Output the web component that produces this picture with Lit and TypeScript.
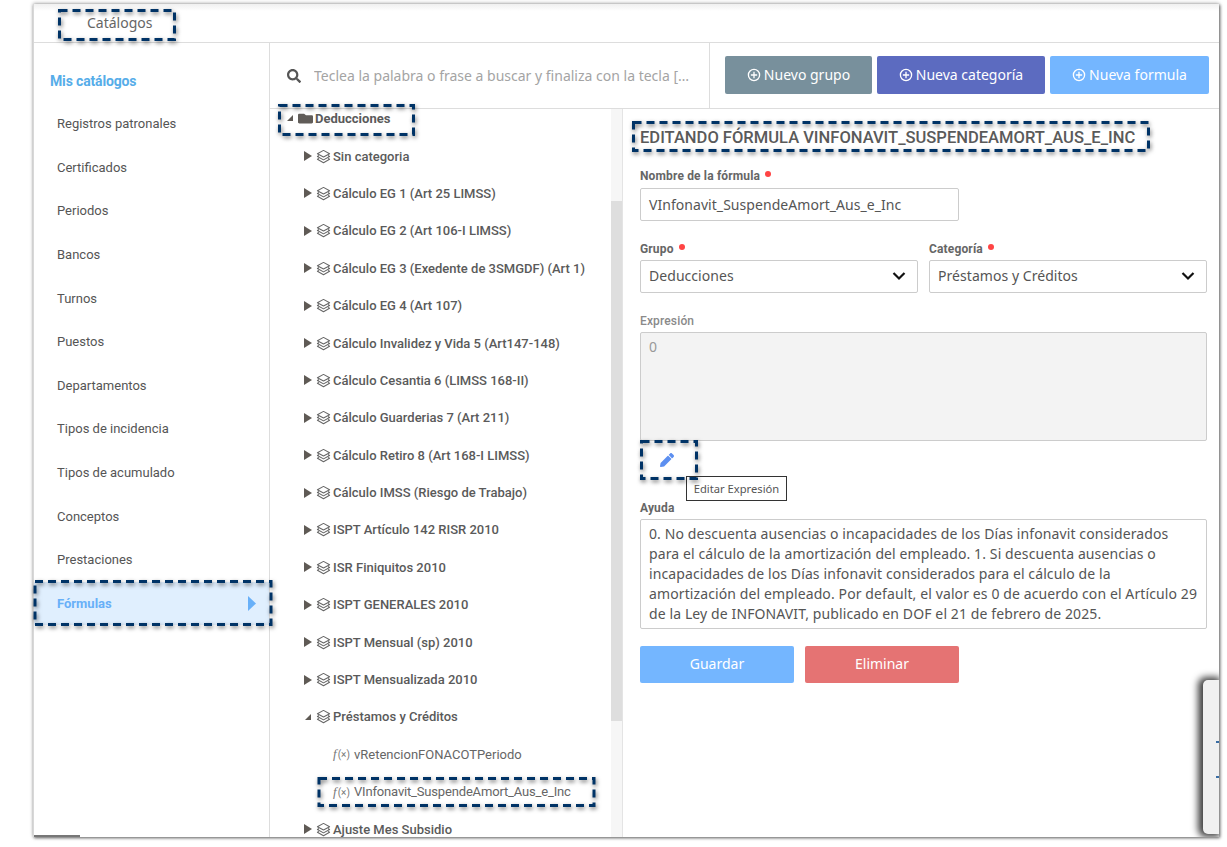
import { LitElement, html, css, svg } from "lit";
import { customElement } from "lit/decorators.js";

const NAV = ["Registros patronales","Certificados","Periodos","Bancos","Turnos","Puestos","Departamentos","Tipos de incidencia","Tipos de acumulado","Conceptos","Prestaciones"];
const CATS1 = ["Sin categoria","Cálculo EG 1 (Art 25 LIMSS)","Cálculo EG 2 (Art 106-I LIMSS)","Cálculo EG 3 (Exedente de 3SMGDF) (Art 1)","Cálculo EG 4 (Art 107)","Cálculo Invalidez y Vida 5 (Art147-148)","Cálculo Cesantia 6 (LIMSS 168-II)","Cálculo Guarderias 7 (Art 211)","Cálculo Retiro 8 (Art 168-I LIMSS)","Cálculo IMSS (Riesgo de Trabajo)","ISPT Artículo 142 RISR 2010","ISR Finiquitos 2010","ISPT GENERALES 2010","ISPT Mensual (sp) 2010","ISPT Mensualizada 2010"];
const NOTES = [[59.5,10.5,115,29],[279.5,105.5,134,29],[633.5,122.5,515,28],[641.5,441.5,55,37],[35,581.5,236,43],[319,778.5,275,27]];

const layers = html`<svg class="layers" viewBox="0 0 16 16" fill="none" stroke="currentColor" stroke-width="1.1" stroke-linejoin="round"><path d="M8 1.5 14.5 5 8 8.5 1.5 5Z"/><path d="M3.2 7 1.5 8 8 11.6 14.5 8 12.8 7"/><path d="M3.2 10 1.5 11 8 14.6 14.5 11 12.8 10"/></svg>`;
const plus = html`<svg class="plus" viewBox="0 0 16 16" fill="none" stroke="currentColor" stroke-width="1.5"><circle cx="8" cy="8" r="6.4"/><path d="M8 4.4v7.2M4.4 8h7.2"/></svg>`;
const chevron = html`<svg class="chev" viewBox="0 0 14 10" fill="none" stroke="#111" stroke-width="2.2"><path d="M1.5 2 7 7.5 12.5 2"/></svg>`;
const closed = html`<svg class="caret" viewBox="0 0 8 10"><path d="M0 0 8 5 0 10Z" fill="#5f5a55"/></svg>`;
const open = html`<svg class="caret" viewBox="0 0 8 10"><path d="M7 2V8H1Z" fill="#5f5a55"/></svg>`;

@customElement("app-root")
export class AppRoot extends LitElement {
  static styles = css`
    :host { display: block; width: 1227px; height: 847px; position: relative; overflow: hidden; background: #fff; font-family: Roboto, "Liberation Sans", sans-serif; color: #555; box-sizing: border-box; padding: 4px 8px 10px 33px; }
    * { box-sizing: border-box; }
    .frame { position: relative; width: 1186px; height: 833px; background: #fff; box-shadow: 0 -1px 4px rgba(0,0,0,.22), 1px 1px 3px rgba(0,0,0,.6); overflow: hidden; display: flex; flex-direction: column; border-left: 1px solid #d8d8d8; }
    .top { height: 39px; flex: none; border-bottom: 1px solid #ddd; padding: 0 0 2px 53px; display: flex; align-items: center; font: 14px "Noto Sans", sans-serif; color: #666; background: linear-gradient(#f0f0f0, #fff 7px); }
    .body { flex: 1; display: flex; min-height: 0; }
    .side { width: 236px; flex: none; border-right: 1px solid #ddd; padding-top: 30px; }
    .side h2 { margin: 0 0 12.2px 16px; font-size: 14px; font-weight: 700; color: #56ade9; line-height: 17px; letter-spacing: -.15px; }
    .nav { height: 43.6px; padding-left: 23px; font-size: 13px; line-height: 43.6px; color: #555; }
    .nav.active { background: #e0effe; color: #68b0f8; font-weight: 700; display: flex; justify-content: space-between; align-items: center; padding-right: 13px; }
    .nav.active svg { width: 8px; height: 15px; }
    .main { flex: 1; display: flex; flex-direction: column; min-width: 0; }
    .bar { height: 66px; flex: none; border-bottom: 1px solid #ddd; display: flex; }
    .search { width: 440px; flex: none; border-right: 1px solid #ddd; display: flex; align-items: center; padding: 0 13px 0 17px; gap: 13px; }
    .search svg { width: 14px; height: 14px; flex: none; fill: #555; }
    .search input { flex: 1; min-width: 0; border: 0; outline: 0; padding: 0; font: 14px "Noto Sans", sans-serif; text-overflow: ellipsis; }
    .search input::placeholder { color: #a4a4a4; opacity: 1; }
    .btns { flex: 1; display: flex; gap: 5px; padding: 13px 0 0 15px; }
    .btn { height: 38px; border-radius: 2px; color: #fff; font: 14px "Noto Sans", sans-serif; display: flex; align-items: center; justify-content: center; gap: 3px; padding-bottom: 1px; }
    .plus { width: 14px; height: 14px; }
    .b1 { width: 147px; background: #78909c; } .b2 { width: 168px; background: #5c6bc0; } .b3 { width: 159px; background: #74b6ff; }
    .split { flex: 1; display: flex; min-height: 0; }
    .treewrap { width: 353px; flex: none; border-right: 1px solid #e4e4e4; position: relative; overflow: hidden; }
    .track { position: absolute; right: 0; top: 0; bottom: 0; width: 11px; background: #f6f6f6; }
    .thumb { position: absolute; right: 0; top: 92px; height: 520px; width: 11px; background: #dedede; }
    .tree { font-size: 13px; font-weight: 500; color: #5a5a5a; }
    .group { display: flex; align-items: center; height: 18px; margin-bottom: 10.4px; padding-left: 16px; font-weight: 700; }
    .group .caret { margin-right: 4px; }
    .folder { width: 15px; height: 13px; fill: #605c58; margin-right: 2px; flex: none; }
    .row { display: flex; align-items: center; height: 37.4px; padding-left: 34px; white-space: nowrap; }
    .caret { width: 8px; height: 10px; flex: none; margin-right: 4px; }
    .layers { width: 15px; height: 15px; flex: none; margin-right: 2px; color: #666; }
    .row.fx { padding-left: 63px; font-weight: 400; color: #666; }
    .row.tight { letter-spacing: -.17px; }
    .fxi { display: inline-flex; align-items: baseline; width: 21px; color: #777; font-size: 10px; flex: none; letter-spacing: 0; }
    .fxi i { font: italic 13px "Liberation Serif", serif; margin-right: 1px; }
    .form { flex: 1; min-width: 0; padding: 0 12px 0 17px; position: relative; }
    h1 { margin: 19px 0 0; font-size: 16.55px; line-height: 20px; font-weight: 500; color: #5a5a5a; white-space: nowrap; }
    label { display: block; font-size: 12px; font-weight: 700; line-height: 14px; color: #666; letter-spacing: .15px; }
    label b { display: inline-block; width: 6px; height: 6px; border-radius: 50%; background: #f44; margin-left: 5px; vertical-align: 3px; }
    label.dim { color: #8a8a8a; font-weight: 500; }
    .field { height: 33px; border: 1px solid #ccc; border-radius: 2px; margin-top: 4px; padding: 0 8px; display: flex; align-items: center; justify-content: space-between; font: 14px "Noto Sans", sans-serif; letter-spacing: .05px; color: #555; background: #fff; white-space: nowrap; }
    .name { width: 319px; margin-top: 5px; }
    .l1 { margin-top: 21px; }
    .cols { display: flex; gap: 11px; margin-top: 21px; }
    .cols > div { width: 278px; }
    .cols .field { padding-bottom: 2px; }
    .chev { width: 14px; height: 10px; margin-right: 3px; flex: none; }
    .l2 { margin-top: 21px; }
    .expr { height: 109px; margin-top: 4px; border: 1px solid #ccc; border-radius: 2px; background: #f3f3f3; color: #999; font: 14px/20px "Noto Sans", sans-serif; padding: 4px 8px; }
    .edit { height: 60px; padding: 12px 0 0 20px; }
    .edit svg { width: 14px; height: 14px; fill: #5c8ff0; display: block; }
    .tip { position: absolute; left: 63px; top: 367px; width: 101px; height: 25px; border: 1px solid #333; background: #fff; font: 11.2px/23px "Noto Sans", sans-serif; color: #555; text-align: center; white-space: nowrap; }
    .help { height: 110px; margin-top: 4px; border: 1px solid #ccc; border-radius: 2px; font: 14px/20.2px "Noto Sans", sans-serif; letter-spacing: .11px; color: #555; padding: 3.5px 8px; }
    .actions { display: flex; gap: 11px; margin-top: 17px; }
    .act { width: 154px; height: 37px; color: #fff; font: 14px/35px "Noto Sans", sans-serif; text-align: center; border-radius: 2px; }
    .save { background: #74b6ff; } .del { background: #e57373; }
    .dock { position: absolute; right: 0; bottom: 3px; width: 16px; height: 154px; background: #f0f0f0; border-radius: 5px 0 0 5px; box-shadow: -2px 0 7px 3px rgba(0,0,0,.75); }
    .dock span { position: absolute; right: 0; width: 3px; height: 2px; background: #3a6ea5; }
    .d1 { top: 61px; } .d2 { top: 96px; }
    .stub { position: absolute; left: 0; bottom: 0; width: 46px; height: 2px; background: #777; }
    .notes { position: absolute; inset: 0; width: 1227px; height: 847px; pointer-events: none; filter: drop-shadow(1px 2px 2px rgba(0,0,0,.55)); }
    .notes rect { fill: none; stroke: #003366; stroke-width: 3px; stroke-dasharray: 8 5; }
  `;

  render() {
    return html`
      <div class="frame">
        <div class="top">Catálogos</div>
        <div class="body">
          <aside class="side">
            <h2>Mis catálogos</h2>
            ${NAV.map(n => html`<div class="nav">${n}</div>`)}
            <div class="nav active">Fórmulas <svg viewBox="0 0 8 15"><path d="M0 0 8 7.5 0 15Z" fill="#68b0f8"/></svg></div>
          </aside>
          <div class="main">
            <div class="bar">
              <div class="search">
                <svg viewBox="0 0 512 512"><path d="M505 442.7L405.3 343c-4.5-4.5-10.6-7-17-7H372c27.6-35.3 44-79.7 44-128C416 93.1 322.9 0 208 0S0 93.1 0 208s93.1 208 208 208c48.3 0 92.7-16.4 128-44v16.3c0 6.4 2.5 12.5 7 17l99.7 99.7c9.4 9.4 24.6 9.4 33.9 0l28.3-28.3c9.4-9.4 9.4-24.6.1-34zM208 336c-70.7 0-128-57.2-128-128 0-70.7 57.2-128 128-128 70.7 0 128 57.2 128 128 0 70.7-57.2 128-128 128z"/></svg>
                <input placeholder="Teclea la palabra o frase a buscar y finaliza con la tecla [Enter]" />
              </div>
              <div class="btns">
                <div class="btn b1">${plus}Nuevo grupo</div>
                <div class="btn b2">${plus}Nueva categoría</div>
                <div class="btn b3">${plus}Nueva formula</div>
              </div>
            </div>
            <div class="split">
              <div class="treewrap">
                <div class="track"></div><div class="thumb"></div>
                <div class="tree">
                  <div class="group">${open}<svg class="folder" viewBox="0 0 512 512" preserveAspectRatio="none"><path d="M464 128H272l-64-64H48C21.49 64 0 85.49 0 112v288c0 26.51 21.49 48 48 48h416c26.51 0 48-21.49 48-48V176c0-26.51-21.49-48-48-48z"/></svg>Deducciones</div>
                  ${CATS1.map(c => html`<div class="row">${closed}${layers}${c}</div>`)}
                  <div class="row">${open}${layers}Préstamos y Créditos</div>
                  <div class="row fx"><span class="fxi"><i>f</i>(×)</span>vRetencionFONACOTPeriodo</div>
                  <div class="row fx tight"><span class="fxi"><i>f</i>(×)</span>VInfonavit_SuspendeAmort_Aus_e_Inc</div>
                  <div class="row">${closed}${layers}Ajuste Mes Subsidio</div>
                </div>
              </div>
              <div class="form">
                <h1>EDITANDO FÓRMULA VINFONAVIT_SUSPENDEAMORT_AUS_E_INC</h1>
                <label class="l1">Nombre de la fórmula<b></b></label>
                <div class="field name">VInfonavit_SuspendeAmort_Aus_e_Inc</div>
                <div class="cols">
                  <div><label>Grupo<b></b></label><div class="field">Deducciones ${chevron}</div></div>
                  <div><label>Categoría<b></b></label><div class="field">Préstamos y Créditos ${chevron}</div></div>
                </div>
                <label class="l2 dim">Expresión</label>
                <div class="expr">0</div>
                <div class="edit"><svg viewBox="0 0 512 512"><path d="M497.9 142.1l-46.1 46.1c-4.7 4.7-12.3 4.7-17 0l-111-111c-4.7-4.7-4.7-12.3 0-17l46.1-46.1c18.7-18.7 49.1-18.7 67.9 0l60.1 60.1c18.8 18.7 18.8 49.1 0 67.9zM284.2 99.8L21.6 362.4.4 483.9c-2.9 16.4 11.4 30.6 27.8 27.8l121.5-21.3 262.6-262.6c4.7-4.7 4.7-12.3 0-17l-111-111c-4.8-4.7-12.4-4.7-17.1 0z"/></svg></div>
                <label>Ayuda</label>
                <div class="help">0. No descuenta ausencias o incapacidades de los Días infonavit considerados para el cálculo de la amortización del empleado. 1. Si descuenta ausencias o incapacidades de los Días infonavit considerados para el cálculo de la amortización del empleado. Por default, el valor es 0 de acuerdo con el Artículo 29 de la Ley de INFONAVIT, publicado en DOF el 21 de febrero de 2025.</div>
                <div class="actions"><div class="act save">Guardar</div><div class="act del">Eliminar</div></div>
                <div class="tip">Editar Expresión</div>
              </div>
            </div>
          </div>
        </div>
        <div class="stub"></div>
        <div class="dock"><span class="d1"></span><span class="d2"></span></div>
      </div>
      <svg class="notes" viewBox="0 0 1227 847">${NOTES.map(([x,y,w,h]) => svg`<rect x=${x} y=${y} width=${w} height=${h}></rect>`)}</svg>
    `;
  }
}
